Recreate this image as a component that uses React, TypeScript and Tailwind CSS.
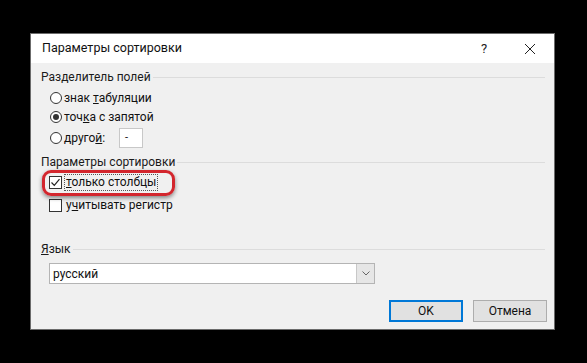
import React from "react";

const font = { fontFamily: 'Roboto, "Noto Sans", Arial, sans-serif' };

function GroupHeader({ children, mt }: { children: React.ReactNode; mt: string }) {
  return (
    <div className={`flex items-center h-[16px] pl-[10px] pr-[9px] ${mt}`}>
      <span className="text-[12px] text-[#1a1a1a] leading-none whitespace-nowrap">{children}</span>
      <div className="flex-1 h-px bg-[#dcdcdc] ml-[2px] mt-px" />
    </div>
  );
}

function Radio({ checked }: { checked?: boolean }) {
  return (
    <div className="w-[12px] h-[12px] rounded-full border border-[#333] bg-white flex items-center justify-center shrink-0">
      {checked && <div className="w-[6px] h-[6px] rounded-full bg-[#333]" />}
    </div>
  );
}

function Check({ checked }: { checked?: boolean }) {
  return (
    <div className="w-[13px] h-[13px] border border-[#333] bg-white flex items-center justify-center shrink-0">
      {checked && (
        <svg width="11" height="11" viewBox="0 0 11 11">
          <path d="M1.5 5.5 L4.3 8.3 L9.5 2.2" fill="none" stroke="#222" strokeWidth="1.2" />
        </svg>
      )}
    </div>
  );
}

export default function App() {
  return (
    <div className="w-[587px] h-[363px] bg-black pt-[33px] pl-[30px]" style={font}>
      <div className="w-[525px] border border-[#6b6b6b] bg-[#f0f0f0] flex flex-col">
        <div className="h-[29px] bg-white flex items-center pl-[11px]">
          <span className="text-[12.5px] text-[#111] flex-1">Параметры сортировки</span>
          <span className="text-[13px] text-[#222] w-[10px] mr-[33px]">?</span>
          <svg width="12" height="12" viewBox="0 0 12 12" className="mr-[18px]">
            <path d="M1 1 L11 11 M11 1 L1 11" stroke="#222" strokeWidth="1" />
          </svg>
        </div>
        <div className="flex flex-col pt-[6px] pb-[7px] text-[12px] text-[#111]">
          <GroupHeader mt="mt-0">Разделитель полей</GroupHeader>
          <div className="flex items-center h-[18px] mt-[4px] pl-[19px]">
            <Radio />
            <span className="ml-[2px]">знак <span className="underline">т</span>абуляции</span>
          </div>
          <div className="flex items-center h-[18px] mt-px pl-[19px]">
            <Radio checked />
            <span className="ml-[2px]">точ<span className="underline">к</span>а с запятой</span>
          </div>
          <div className="flex items-center h-[20px] mt-[2px] pl-[19px]">
            <Radio />
            <span className="ml-[2px] w-[55px]">друго<span className="underline">й</span>:</span>
            <div className="w-[24px] h-[20px] bg-white border border-[#c8c8c8] flex items-center pl-[5px] text-[11px]">-</div>
          </div>
          <GroupHeader mt="mt-[6px]">Параметры сортировки</GroupHeader>
          <div className="relative flex items-center h-[18px] mt-[3px] pl-[18px]">
            <div className="absolute left-[11px] top-[-3px] w-[133px] h-[26px] rounded-[9px] border-[3px] border-[#d3262d] shadow-[0_2px_4px_rgba(0,0,0,0.45)]" />
            <Check checked />
            <span className="ml-[2px] px-px border border-dotted border-[#555] leading-[15px]"><span className="underline">т</span>олько столбцы</span>
          </div>
          <div className="flex items-center h-[18px] mt-[5px] pl-[18px]">
            <Check />
            <span className="ml-[4px]">у<span className="underline">ч</span>итывать регистр</span>
          </div>
          <GroupHeader mt="mt-[27px]"><span className="underline">Я</span>зык</GroupHeader>
          <div className="flex mt-[6px] ml-[18px] w-[326px] h-[21px] border border-[#b4b4b4] bg-white">
            <span className="flex-1 flex items-center pl-[3px] text-[12px]">русский</span>
            <div className="w-[18px] bg-[#e6e6e6] border-l border-[#c8c8c8] flex items-center justify-center">
              <svg width="8" height="5" viewBox="0 0 8 5">
                <path d="M0.5 0.5 L4 4 L7.5 0.5" fill="none" stroke="#666" strokeWidth="1" />
              </svg>
            </div>
          </div>
          <div className="flex justify-end gap-[10px] mt-[16px] pr-[7px]">
            <div className="w-[74px] h-[22px] bg-[#e1e1e1] border-2 border-[#0078d7] flex items-center justify-center text-[12px]">OK</div>
            <div className="w-[74px] h-[22px] bg-[#e1e1e1] border border-[#adadad] flex items-center justify-center text-[12px]">Отмена</div>
          </div>
        </div>
      </div>
    </div>
  );
}
